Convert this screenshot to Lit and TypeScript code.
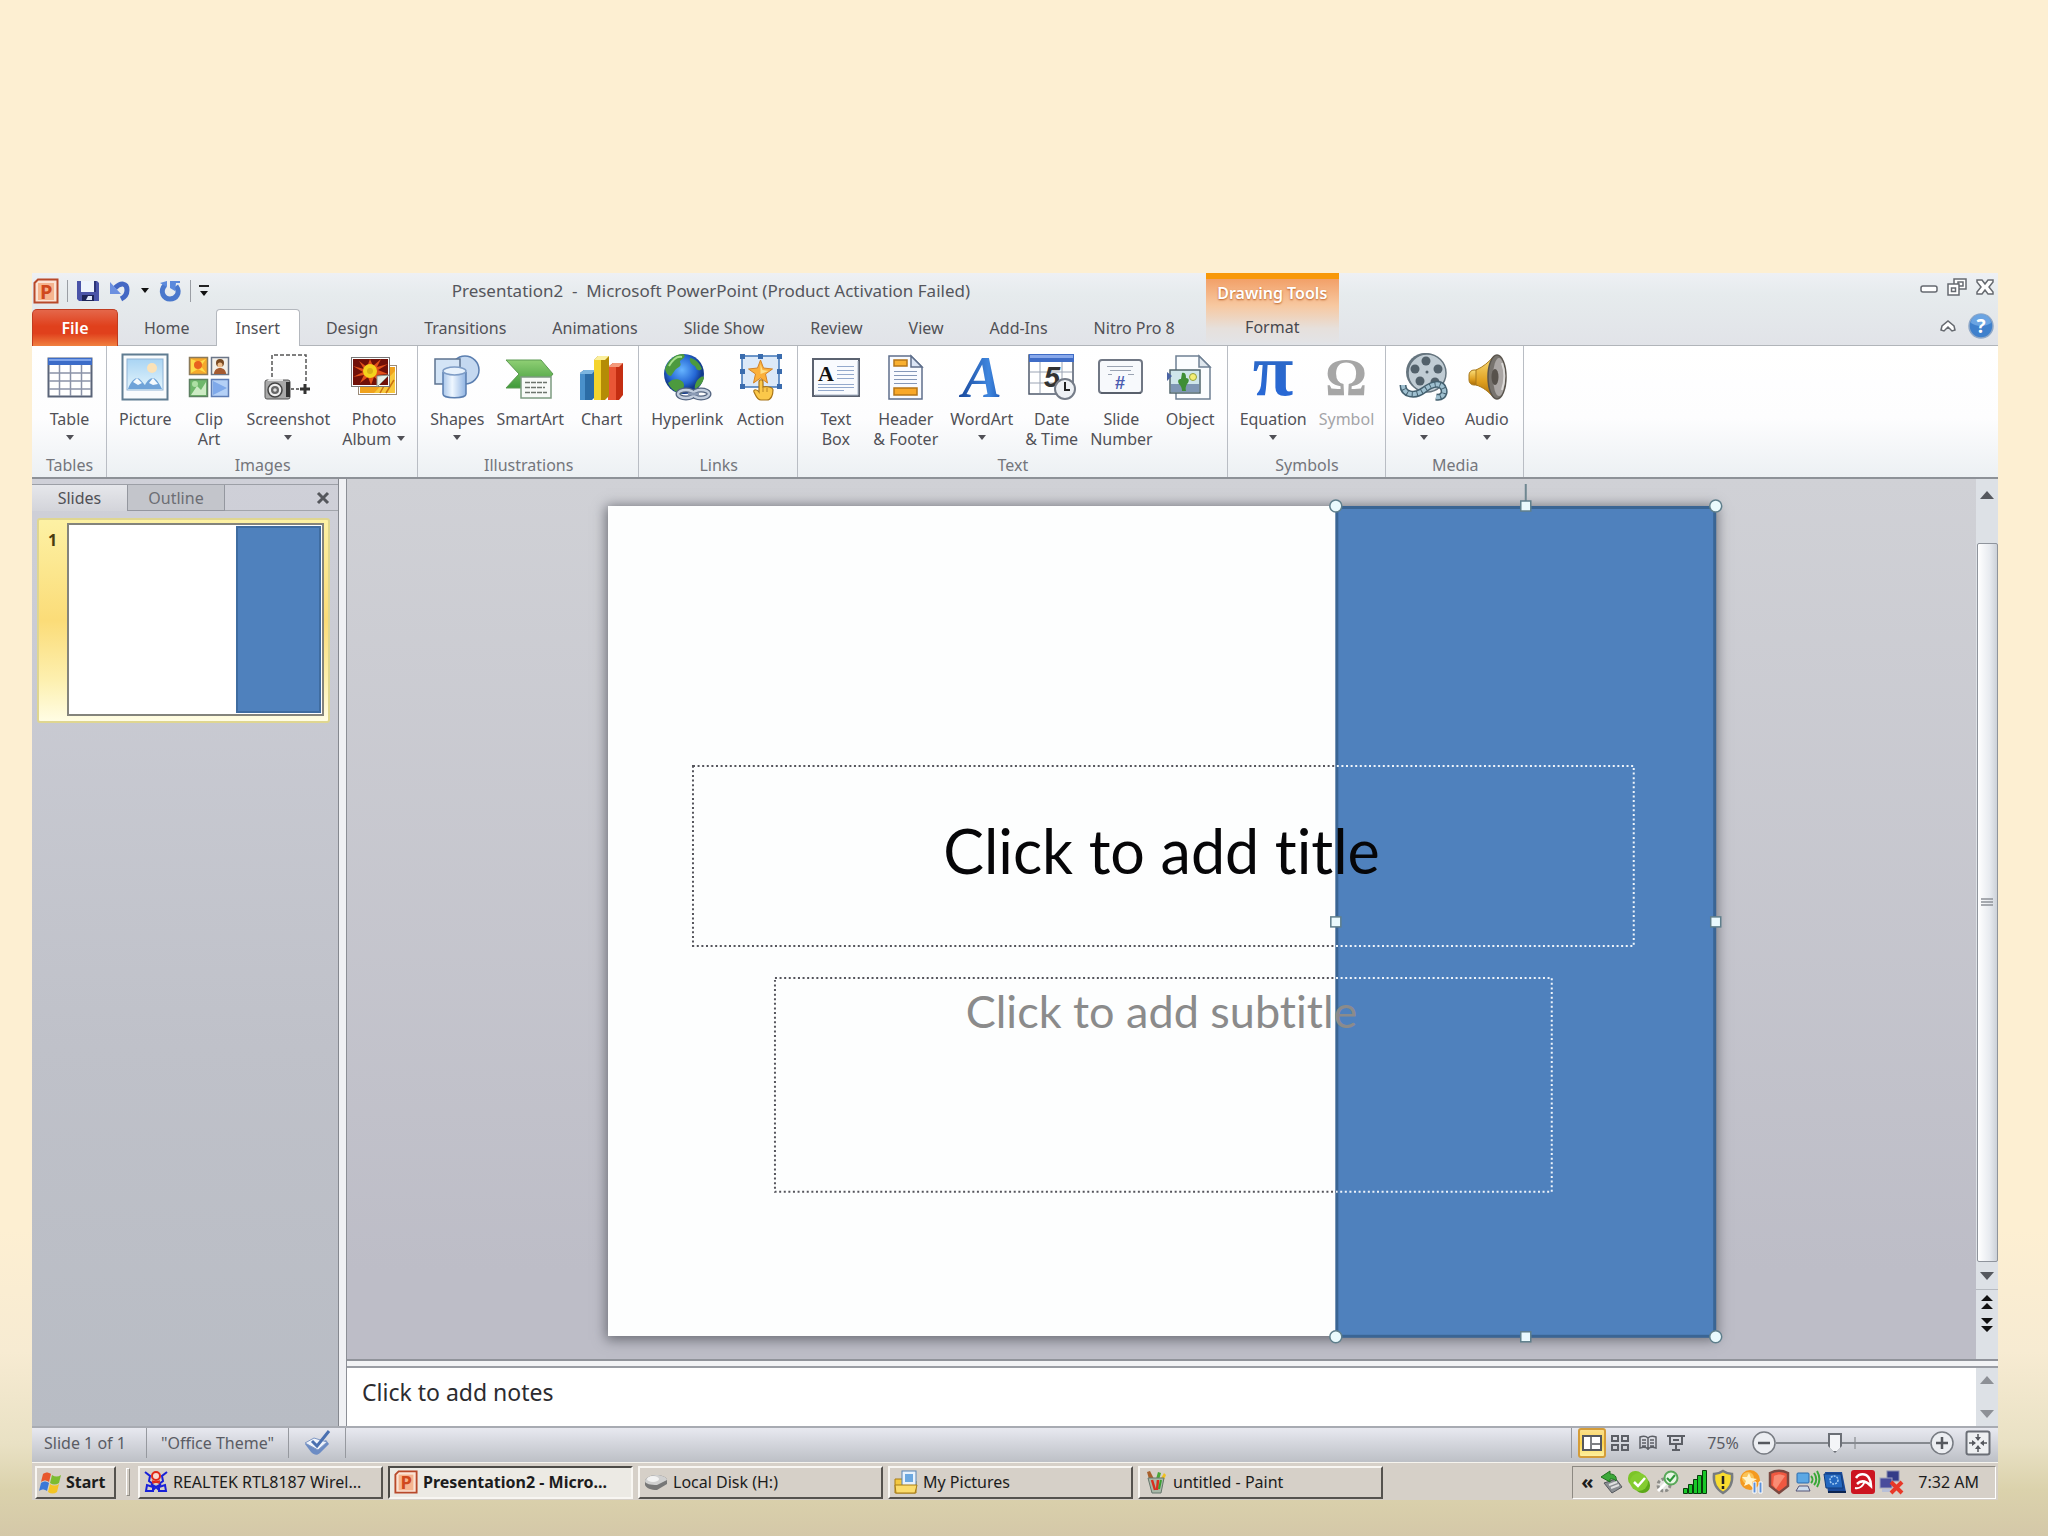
import { LitElement, html, svg, css, TemplateResult } from "lit";
import { customElement, state } from "lit/decorators.js";

type Icon = TemplateResult;

/* ---------- Ribbon icons, 48 x 48 ---------- */
const tableIcon: Icon = html`<svg viewBox="0 0 48 48" aria-hidden="true">
  <rect x="2.500" y="5.500" width="43" height="38" fill="#fff" stroke="#5a6478" stroke-width="2"/>
  <path d="M2 5h44v7H2z" fill="#3c6cc8"/><path d="M3 6h42v2H3z" fill="#7fa4ea"/>
  <path d="M13.500 12v31M24.500 12v31M35.500 12v31M3 20h42M3 28h42M3 36h42" stroke="#8b93a8" stroke-width="1.500"/>
</svg>`;
const pictureIcon: Icon = html`<svg viewBox="0 0 48 48" aria-hidden="true">
  <defs><linearGradient id="pic" x2="0" y2="1"><stop stop-color="#a9d4f3"/><stop offset="1" stop-color="#e4f5fc"/></linearGradient></defs>
  <rect x="1.500" y="1.500" width="45" height="45" fill="#f8fbfd" stroke="#5f7c92" stroke-width="2"/>
  <rect x="6" y="6" width="36" height="31" fill="url(#pic)" stroke="#8fb4d6"/>
  <circle cx="31" cy="15" r="5" fill="#fbe2b8"/>
  <path d="M7 36c2-6 6-11 9-11s6 5 8 7c2-4 5-7 8-7s6 5 9 11z" fill="#6fa3d8"/>
  <path d="M12 29l4-4 5 5-4 2zM28 30l4-5 5 6-5 1z" fill="#f4fafe"/>
</svg>`;
const clipIcon: Icon = html`<svg viewBox="0 0 48 48" aria-hidden="true">
  <rect x="4.500" y="4.500" width="18" height="17" fill="#f6a92b" stroke="#8b7a5a" stroke-width="1.500"/>
  <path d="M6 6l8 3 7-3-5 7 5 7-8-4-7 4z" fill="#fcdc4a"/><circle cx="13" cy="12" r="4" fill="#e8621e"/>
  <rect x="26.500" y="4.500" width="17" height="17" fill="#f3f0ea" stroke="#6b7688" stroke-width="1.500"/>
  <circle cx="35" cy="10" r="4" fill="#7a4a22"/><circle cx="35" cy="12" r="2.500" fill="#eebf8e"/><path d="M29 21c0-4 3-6 6-6s6 2 6 6z" fill="#a55b32"/>
  <rect x="4.500" y="26.500" width="18" height="17" fill="#6fb86b" stroke="#5d7f62" stroke-width="1.500"/>
  <path d="M6 42l6-9 4 4 5-8v13z" fill="#cdebc4"/><circle cx="10" cy="31" r="3" fill="#aee0a4"/>
  <rect x="26.500" y="26.500" width="17" height="17" fill="#b4d0f6" stroke="#5d7cb4" stroke-width="1.500"/>
  <path d="M28 28l14 7-14 7z" fill="#7fa9ea"/>
</svg>`;
const shotIcon: Icon = html`<svg viewBox="0 0 48 48" aria-hidden="true">
  <path d="M8 24V2h34v28" fill="none" stroke="#555" stroke-width="1.500" stroke-dasharray="4 2"/>
  <path d="M27 36h8" stroke="#444" stroke-width="1.500" stroke-dasharray="3 2"/><path d="M36 36h10M41 31v10" stroke="#333" stroke-width="3"/>
  <rect x="1" y="27" width="25" height="19" rx="2" fill="#a9a9a9" stroke="#555"/><path d="M3 28h16v-2H5z" fill="#e4e4e4"/>
  <rect x="22" y="29" width="4" height="15" fill="#333"/>
  <circle cx="11" cy="37" r="7" fill="#eee" stroke="#444" stroke-width="1.500"/><circle cx="11" cy="37" r="4" fill="#666"/><circle cx="11" cy="37" r="1.800" fill="#ddd"/>
</svg>`;
const albumIcon: Icon = html`<svg viewBox="0 0 48 48" aria-hidden="true">
  <rect x="8.500" y="12.500" width="38" height="29" fill="#fff" stroke="#9a8a78"/>
  <rect x="10" y="14" width="35" height="26" fill="#f0a21c"/><path d="M24 40l21-22v22z" fill="#f8c83c"/><path d="M30 40l9-16M36 40l8-13" stroke="#c97210" stroke-width="1.500"/>
  <rect x="1.500" y="4.500" width="38" height="29" fill="#fff" stroke="#777"/>
  <rect x="3" y="6" width="35" height="26" fill="#701008"/>
  <path d="M20 6l3 7 8-7-4 8 11-3-10 6 10 4-11 1 5 8-8-6-3 8-3-8-8 6 4-8-11 2 10-5-10-6 11 3-5-8 8 6z" fill="#e2501a"/>
  <circle cx="20" cy="18" r="7" fill="#f4d21c"/><circle cx="20" cy="18" r="3" fill="#d9b014"/>
  <path d="M27 34V23l12-1z" fill="#e6efe8" stroke="#8a948c"/>
</svg>`;
const shapesIcon: Icon = html`<svg viewBox="0 0 48 48" aria-hidden="true">
  <defs><linearGradient id="shp"><stop stop-color="#a9c6ea"/><stop offset=".4" stop-color="#eff7ff"/><stop offset="1" stop-color="#8fb3e2"/></linearGradient></defs>
  <circle cx="32" cy="17" r="14" fill="#c4d8f0" stroke="#5a7eb0" stroke-width="1.500"/>
  <rect x="2" y="6" width="25" height="25" fill="#d3e4f6" stroke="#5d7390" stroke-width="1.500"/>
  <path d="M10 19v22c0 5 23 5 23 0V19" fill="url(#shp)" stroke="#5a7eb0" stroke-width="1.500"/>
  <ellipse cx="21.500" cy="18" rx="11.500" ry="4" fill="#e8f2fc" stroke="#7d9cc6" stroke-width="1.500"/>
</svg>`;
const smartIcon: Icon = html`<svg viewBox="0 0 48 48" aria-hidden="true">
  <defs><linearGradient id="sma" x2="0" y2="1"><stop stop-color="#8fcf74"/><stop offset="1" stop-color="#3f9a3a"/></linearGradient></defs>
  <path d="M0 7h35l12 14-12 14H0l13-14z" fill="url(#sma)" stroke="#5c9a52"/>
  <rect x="15" y="24" width="30" height="21" fill="#f8faf8" stroke="#7c9a80" stroke-width="1.500"/>
  <path d="M19 29.500h22M19 34.500h20M19 39.500h22" stroke="#6d756d" stroke-width="1.500" stroke-dasharray="5 1"/>
</svg>`;
const chartIcon: Icon = html`<svg viewBox="0 0 48 48" aria-hidden="true">
  <path d="M2 20l4-3h11v27l-3 3H2z" fill="#2c6ca6"/><path d="M2 20l4-3h11l-3 4H2z" fill="#7db6e0"/><path d="M2 21h5v26H2z" fill="#4a90cb"/>
  <path d="M30 14l5-4h10v32l-4 5H30z" fill="#c42e12"/><path d="M30 14l5-4h10l-4 4z" fill="#f49a7c"/><path d="M30 14h8v33h-8z" fill="#ea5636"/>
  <path d="M16 7l4-4h11v40l-4 4H16z" fill="#b48c06"/><path d="M16 7l4-4h11l-4 4z" fill="#fbef9c"/><path d="M16 7h7v40h-7z" fill="#f4d32c"/>
</svg>`;
const linkIcon: Icon = html`<svg viewBox="0 0 48 48" aria-hidden="true">
  <defs><radialGradient id="glb" cx=".45" cy=".4"><stop stop-color="#66b4ff"/><stop offset=".7" stop-color="#2466d4"/><stop offset="1" stop-color="#123a8c"/></radialGradient></defs>
  <circle cx="21" cy="21" r="20" fill="url(#glb)"/>
  <path d="M2 16C5 7 12 1 20 1c3 1 2 4-2 6-3 2 2 4-2 7-5 3-5 5-8 9-3 0-5-3-6-7zM27 5c6 1 10 6 12 11-4 3-6 0-7-3-3-1-6-4-5-8zM9 27c6-2 12 1 12 5s-3 6-2 9c-6-1-12-6-14-11zM38 24c2-1 3 0 3 1-1 5-5 9-9 11-1-4 2-10 6-12z" fill="#4c9a3e"/>
  <path d="M6 13C10 6 15 3 19 4" stroke="#a5e08c" stroke-width="2" fill="none"/>
  <g fill="none" stroke="#536480" stroke-width="5"><ellipse cx="23" cy="41" rx="8" ry="4"/><ellipse cx="38" cy="41" rx="8" ry="4"/></g>
  <g fill="none" stroke="#c3cede" stroke-width="2.500"><ellipse cx="23" cy="41" rx="8" ry="4"/><ellipse cx="38" cy="41" rx="8" ry="4"/></g><path d="M25 41h11" stroke="#8b9ab4" stroke-width="3"/>
</svg>`;
const actionIcon: Icon = html`<svg viewBox="0 0 48 48" aria-hidden="true">
  <rect x="5" y="3" width="37" height="31" fill="#dce9f8" stroke="#3f75b8" stroke-width="1.500"/>
  <path d="M23.500 7l3 8 9 1-7 5 2 9-7-5-7 5 2-9-7-5 9-1z" fill="#fbb03a" stroke="#d2842a"/><path d="M23.500 11l2 6 6 1-8 3z" fill="#fde08a"/>
  <g fill="#3a6cae"><path d="M3 1h5v5H3zM21 1h5v5h-5zM40 1h5v5h-5zM3 16h5v5H3zM40 16h5v5h-5zM3 31h5v5H3zM40 31h5v5h-5z"/></g>
  <path d="M22 29c0-3 4-3 4 0v5c3-1 10 0 10 3 0 5-2 10-6 10h-6c-4 0-5-4-7-8-1-3 3-3 5 0z" fill="#fbc84a" stroke="#a87418" stroke-width="1.200"/><path d="M26 34v5M30 35v4" stroke="#b98526"/>
</svg>`;
const textBoxIcon: Icon = html`<svg viewBox="0 0 48 48" aria-hidden="true">
  <rect x="1" y="6" width="46" height="37" fill="#f9fbfe" stroke="#5b6270" stroke-width="2"/><path d="M3 42h43V8" stroke="#aab6c8" fill="none"/>
  <text x="6" y="28" font-family="Liberation Serif, serif" font-weight="700" font-size="22" fill="#111">A</text>
  <path d="M25 13.500h17M25 17.500h17M25 21.500h17M25 25.500h17M6 31.500h36M6 34.500h36M6 37.500h26" stroke="#93a9cc" stroke-width="1.200"/>
</svg>`;
const headerIcon: Icon = html`<svg viewBox="0 0 48 48" aria-hidden="true">
  <path d="M7 3h22l11 11v32H7z" fill="#f9fbff" stroke="#5f6f8c" stroke-width="1.500"/><path d="M29 3v11h11z" fill="#dce6f6" stroke="#5f6f8c" stroke-width="1.500"/>
  <rect x="12" y="7" width="13" height="6" fill="#f9b030" stroke="#b4761a" stroke-width="1.500"/>
  <path d="M12 18.500h23M12 22.500h23M12 26.500h23M12 30.500h23" stroke="#8497b8" stroke-width="1.200"/>
  <rect x="12" y="35" width="23" height="7" fill="#f9a828" stroke="#b4761a" stroke-width="1.500"/>
</svg>`;
const wordArtIcon: Icon = html`<svg viewBox="0 0 48 48" aria-hidden="true">
  <defs><linearGradient id="wa"><stop stop-color="#17469a"/><stop offset=".7" stop-color="#3f86de"/><stop offset="1" stop-color="#1f5ab8"/></linearGradient></defs>
  <text x="4" y="44" font-family="Liberation Serif, serif" font-style="italic" font-weight="700" font-size="60" fill="url(#wa)">A</text>
</svg>`;
const dateIcon: Icon = html`<svg viewBox="0 0 48 48" aria-hidden="true">
  <rect x="1" y="2" width="44" height="39" fill="#fff" stroke="#4f5a6c" stroke-width="1.500"/><path d="M1 1h45v8H1z" fill="#3f6cc6"/><path d="M2 2h43v3H2z" fill="#88a8ea"/>
  <path d="M12 9v31M34 9v31M2 19h42M2 30h42" stroke="#9ba4b4"/>
  <text x="16" y="34" font-family="Liberation Sans, sans-serif" font-weight="700" font-style="italic" font-size="29" fill="#333">5</text>
  <circle cx="37" cy="36" r="10" fill="#eef1f5" stroke="#757c88" stroke-width="2"/><path d="M37 29v8h5" stroke="#222" stroke-width="2" fill="none"/>
</svg>`;
const numberIcon: Icon = html`<svg viewBox="0 0 48 48" aria-hidden="true">
  <rect x="2" y="7" width="43" height="33" rx="3" fill="#f7f9fc" stroke="#707784" stroke-width="2"/><path d="M4 40h40" stroke="#525964" stroke-width="1.500"/>
  <path d="M10 13.500h26M13 17.500h21M11 21.500h4M31 21.500h6" stroke="#9aa3b2"/>
  <text x="18" y="36" font-family="Liberation Sans, sans-serif" font-size="18" font-weight="700" fill="#4a5cb0">#</text>
</svg>`;
const objectIcon: Icon = html`<svg viewBox="0 0 48 48" aria-hidden="true">
  <path d="M10 3h23l11 11v32H10z" fill="#fbfdff" stroke="#6f8094" stroke-width="1.500"/><path d="M33 3v11h11z" fill="#dfe7ee" stroke="#6f8094" stroke-width="1.500"/>
  <rect x="4" y="17" width="30" height="23" fill="#cfe6ea" stroke="#51656c" stroke-width="1.500"/><path d="M5 31h28v8H5z" fill="#7f97b4"/>
  <path d="M16 20c4-1 4 3 4 5 3 0 4 3 1 6-1 2-2 4-1 7h-4c0-3-1-5-3-7-2-4 0-5 2-5z" fill="#3f8e36"/>
  <circle cx="27" cy="24" r="3.500" fill="#f4ee74" stroke="#94a23c"/><path d="M1 19l5 4-5 5z" fill="#4a64a4"/>
</svg>`;
const piIcon: Icon = html`<svg viewBox="0 0 48 48" aria-hidden="true">
  <defs><linearGradient id="pig" x2="0" y2="1"><stop stop-color="#2f68bc"/><stop offset="1" stop-color="#2668dc"/></linearGradient></defs>
  <text x="24" y="42" text-anchor="middle" font-family="Liberation Serif, serif" font-weight="700" font-size="74" fill="url(#pig)">π</text>
</svg>`;
const omegaIcon: Icon = html`<svg viewBox="0 0 48 48" aria-hidden="true">
  <text x="24" y="42" text-anchor="middle" font-family="Liberation Serif, serif" font-weight="700" font-size="52" fill="#a6a6a6">Ω</text>
</svg>`;
const videoIcon: Icon = html`<svg viewBox="0 0 48 48" aria-hidden="true">
  <circle cx="25" cy="19" r="19" fill="#65747e"/><circle cx="27" cy="20" r="19" fill="#c0ccd4" stroke="#65747e" stroke-width="1.500"/>
  <g fill="#52616b"><circle cx="26" cy="8" r="4.500"/><circle cx="38" cy="16" r="4.500"/><circle cx="35" cy="29" r="4.500"/><circle cx="20" cy="28" r="4.500"/><circle cx="15" cy="16" r="4.500"/><circle cx="27" cy="19" r="1.500"/></g>
  <path d="M3 32c0 10 12 12 21 5s18-8 20 0c1 5-3 8-8 7" fill="none" stroke="#44606f" stroke-width="7"/><path d="M3 32c0 10 12 12 21 5s18-8 20 0c1 5-3 8-8 7" fill="none" stroke="#9fc0d0" stroke-width="4" stroke-dasharray="4 1"/>
</svg>`;
const audioIcon: Icon = html`<svg viewBox="0 0 48 48" aria-hidden="true">
  <defs><linearGradient id="aud" x2="0" y2="1"><stop stop-color="#fbe07c"/><stop offset=".6" stop-color="#e0a020"/><stop offset="1" stop-color="#a86c08"/></linearGradient></defs>
  <rect x="6" y="17" width="12" height="15" rx="5" fill="url(#aud)" stroke="#a8781c"/>
  <path d="M13 17C20 14 26 9 31 3v42c-5-6-11-11-18-13z" fill="url(#aud)" stroke="#a8781c"/>
  <ellipse cx="34" cy="24" rx="9" ry="22" fill="#77736e" stroke="#59544d" stroke-width="1.500"/><ellipse cx="36" cy="24" rx="6" ry="19" fill="#aaa6a4"/>
  <ellipse cx="32" cy="24" rx="3.500" ry="8" fill="#57524c"/><path d="M39 10c3 8 3 18 0 27" stroke="#dcdad8" stroke-width="2" fill="none"/>
</svg>`;

/* ---------- Small icons ---------- */
const appIcon: Icon = html`<svg viewBox="0 0 26 26" aria-hidden="true">
  <path d="M5 1.500h19.500v23H1.500V5z" fill="#fbe3d4" stroke="#b8492a" stroke-width="2"/><path d="M5 5h16v17H5z" fill="#f6b48e"/>
  <text x="7" y="21" font-family="Noto Sans, sans-serif" font-weight="700" font-size="20" fill="#d0481c">P</text>
</svg>`;
const saveIcon: Icon = html`<svg viewBox="0 0 24 24" aria-hidden="true">
  <path d="M1 2h20l2 2v18H3l-2-2z" fill="#4a54a8"/><path d="M5 2h14v11H5z" fill="#eef4fc"/><path d="M18 2h2v11h-2z" fill="#2c3478"/><path d="M6 16h12v6H6z" fill="#1c2458"/><path d="M12 17h4v4h-6z" fill="#dfe6f8"/>
</svg>`;
const undoIcon: Icon = html`<svg viewBox="0 0 24 24" aria-hidden="true">
  <path d="M7 9c6-6 12-5 12 2 0 4-2 7-6 9" fill="none" stroke="#4468c4" stroke-width="5"/><path d="M2 3v12h11z" fill="#6c90e0"/>
</svg>`;
const redoIcon: Icon = html`<svg viewBox="0 0 24 24" aria-hidden="true">
  <path d="M7 6c-6 7-1 14 5 14s11-6 6-13" fill="none" stroke="#4a78cc" stroke-width="5"/><path d="M12 2h10v2h-4l-1 8-5-3z" fill="#5c8adc"/><path d="M2 4l7-2v6z" fill="#5c8adc"/>
</svg>`;
const windowsFlag: Icon = html`<svg viewBox="0 0 24 24" aria-hidden="true">
  <path d="M4 4c3-2 5-2 8 0l-2 8c-3-2-5-2-8 0z" fill="#e8582c"/><path d="M13 5c3 2 6 2 9 0l-2 8c-3 2-6 2-9 0z" fill="#7cbc30"/>
  <path d="M2 13c3-2 5-2 8 0l-2 8c-3-2-5-2-8 0z" fill="#3c78d8"/><path d="M11 14c3 2 6 2 9 0l-2 8c-3 2-6 2-9 0z" fill="#f4c424"/>
</svg>`;
const realtekIcon: Icon = html`<svg viewBox="0 0 24 24" aria-hidden="true">
  <g fill="none" stroke="#1820d8" stroke-width="2"><path d="M1 2l5 4-1 5 4 3M23 2l-5 4 1 5-4 3M7 14l5 3 5-3M9 17l-6-2-1 6h7zM15 17l6-2 1 6h-7zM9 20l3-3 3 3"/></g>
  <circle cx="12" cy="6" r="4" fill="#f8d8d0" stroke="#e02818" stroke-width="2"/><path d="M8 11l8 2M16 11l-8 2" stroke="#e02818" stroke-width="1.500"/>
</svg>`;
const diskIcon: Icon = html`<svg viewBox="0 0 24 24" aria-hidden="true">
  <path d="M1 11c0-3 6-6 11-6s11 2 11 5v4l-10 6c-6 0-11-2-12-5z" fill="#777"/><path d="M1 11c0-3 6-6 11-6s11 2 11 5l-10 5c-6 0-12-1-12-4z" fill="#d0d0d0"/><ellipse cx="9" cy="9" rx="6" ry="3" fill="#f2f2f2"/>
</svg>`;
const picturesIcon: Icon = html`<svg viewBox="0 0 24 24" aria-hidden="true">
  <path d="M1 9h7l2 2h12v12H1z" fill="#f4c840" stroke="#a87c14"/><rect x="8" y="1" width="14" height="15" fill="#e8f2fc" stroke="#5884b4"/><rect x="11" y="4" width="8" height="8" fill="#6ca8e0"/><path d="M1 15h22l-2 8H2z" fill="#fbdc6c" stroke="#a87c14"/>
</svg>`;
const paintIcon: Icon = html`<svg viewBox="0 0 24 24" aria-hidden="true">
  <path d="M5 9l-2-7 3-1 4 8z" fill="#a8602c"/><path d="M12 9l2-7 3 1-2 7z" fill="#48a838"/><path d="M16 10l4-7 2 2-3 7z" fill="#f0c020"/>
  <path d="M4 8h16l-3 15H8z" fill="#a8b8a8" stroke="#66766c"/><path d="M8 10l3 10M14 10l-1 10" stroke="#d83020" stroke-width="2.500"/><path d="M17 10l-2 9" stroke="#38a030" stroke-width="2"/>
</svg>`;

const trayIcons: { name: string; art: Icon }[] = [
  { name: "Safely remove hardware", art: html`<svg viewBox="0 0 24 24"><path d="M5 13l12-4 6 8-10 6z" fill="#8a8e92" stroke="#55595e"/><path d="M12 18l8-3M10 15l8-3" stroke="#e0e0e0" stroke-width="2"/><path d="M2 7l9-6v3c5 0 7 3 6 7-2-2-3-2-6-2v3z" fill="#3ca838" stroke="#207020"/></svg>` },
  { name: "Messenger", art: html`<svg viewBox="0 0 24 24"><rect x="1" y="1" width="15" height="15" rx="7" fill="#7cc428"/><rect x="8" y="8" width="15" height="15" rx="7" fill="#5ca818"/><circle cx="12" cy="12" r="9" fill="#84cc30"/><path d="M7 12l4 4 7-8" fill="none" stroke="#fff" stroke-width="2.500"/></svg>` },
  { name: "Updates", art: html`<svg viewBox="0 0 24 24"><circle cx="9" cy="15" r="6" fill="#e4e4e0" stroke="#8c8c88" stroke-width="3" stroke-dasharray="3 2"/><path d="M3 21l8-8" stroke="#fff" stroke-width="3"/><circle cx="16" cy="8" r="6.500" fill="#e8f6e4" stroke="#58a858" stroke-width="2"/><path d="M12 8l3 3 5-6" fill="none" stroke="#2c9838" stroke-width="2"/></svg>` },
  { name: "Signal strength", art: html`<svg viewBox="0 0 24 24"><g fill="#18c828" stroke="#083c0c"><path d="M.500 18.500h4v5h-4zM5.500 14.500h4v9h-4zM10.500 9.500h4v14h-4zM14.500 5.500h4v18h-4zM19.500.500h4v23h-4z"/></g></svg>` },
  { name: "Security alert", art: html`<svg viewBox="0 0 24 24"><path d="M12 1c3 2 6 3 9 3 1 9-2 15-9 19C5 19 2 13 3 4c3 0 6-1 9-3z" fill="#f8dc30" stroke="#777c80" stroke-width="2.500"/><path d="M12 6v8M12 16v3" stroke="#222" stroke-width="2.500"/></svg>` },
  { name: "Power", art: html`<svg viewBox="0 0 24 24"><circle cx="11" cy="10" r="10" fill="#f49a20"/><circle cx="9" cy="8" r="6" fill="#fbc458"/><path d="M10 3l2 5 6 1-5 3 1 6-4-4-5 2 2-5-4-4h5z" fill="#fff4cc"/><path d="M14 12h3v11h-3zM20 12h3v11h-3z" fill="#5c90d8" stroke="#fff"/></svg>` },
  { name: "Antivirus shield", art: html`<svg viewBox="0 0 24 24"><path d="M3 3c6-3 12-3 18 0v13l-9 7-9-7z" fill="#f05840" stroke="#7c4840" stroke-width="2.500"/><path d="M7 6c4-2 7-2 11 0l-9 13-3-4z" fill="#f98c74"/></svg>` },
  { name: "Wireless network", art: html`<svg viewBox="0 0 24 24"><rect x="2" y="3" width="12" height="10" rx="1" fill="#5ca8e4" stroke="#2c6cac"/><path d="M4 16h9l2 5H1z" fill="#ccdcec" stroke="#557"/><path d="M16 6c2 2 2 5 0 7M19 3c3 4 3 9 0 12M22 1c3 5 3 11 0 16" fill="none" stroke="#38a838" stroke-width="2"/></svg>` },
  { name: "Wireless utility", art: html`<svg viewBox="0 0 24 24"><path d="M2 2h17l4 20H5z" fill="#1c4c9c"/><path d="M1 4h17l2 14H3z" fill="#2468c0" stroke="#123c7c"/><circle cx="11" cy="10" r="4" fill="none" stroke="#a4ccf4" stroke-width="1.500" stroke-dasharray="2 1"/><path d="M5 22h18" stroke="#0c2450" stroke-width="2"/></svg>` },
  { name: "Avira", art: html`<svg viewBox="0 0 24 24"><rect width="24" height="24" rx="3" fill="#cc1420"/><path d="M5 8c3-5 10-5 13 0 2 3 2 6 2 8-5-5-10-6-14-2" fill="none" stroke="#fff" stroke-width="2.500"/><path d="M14 11c-2 5-5 8-10 7" fill="none" stroke="#fff" stroke-width="2"/></svg>` },
  { name: "Network disconnected", art: html`<svg viewBox="0 0 24 24"><rect x="8" y="1" width="12" height="10" fill="#343c88" stroke="#888cac"/><rect x="1" y="8" width="12" height="10" fill="#484c9c" stroke="#a0a4c0"/><path d="M3 19h8v3H3z" fill="#b8c0d8"/><path d="M12 12l11 11M23 12L12 23" stroke="#e83828" stroke-width="4"/></svg>` },
];

interface Item { label: string[]; icon: Icon; arrow?: "below" | "inline"; off?: boolean }
interface Group { name: string; items: Item[] }

const groups: Group[] = [
  { name: "Tables", items: [{ label: ["Table"], icon: tableIcon, arrow: "below" }] },
  { name: "Images", items: [
    { label: ["Picture"], icon: pictureIcon },
    { label: ["Clip", "Art"], icon: clipIcon },
    { label: ["Screenshot"], icon: shotIcon, arrow: "below" },
    { label: ["Photo", "Album"], icon: albumIcon, arrow: "inline" } ] },
  { name: "Illustrations", items: [
    { label: ["Shapes"], icon: shapesIcon, arrow: "below" },
    { label: ["SmartArt"], icon: smartIcon },
    { label: ["Chart"], icon: chartIcon } ] },
  { name: "Links", items: [
    { label: ["Hyperlink"], icon: linkIcon },
    { label: ["Action"], icon: actionIcon } ] },
  { name: "Text", items: [
    { label: ["Text", "Box"], icon: textBoxIcon },
    { label: ["Header", "& Footer"], icon: headerIcon },
    { label: ["WordArt"], icon: wordArtIcon, arrow: "below" },
    { label: ["Date", "& Time"], icon: dateIcon },
    { label: ["Slide", "Number"], icon: numberIcon },
    { label: ["Object"], icon: objectIcon } ] },
  { name: "Symbols", items: [
    { label: ["Equation"], icon: piIcon, arrow: "below" },
    { label: ["Symbol"], icon: omegaIcon, off: true } ] },
  { name: "Media", items: [
    { label: ["Video"], icon: videoIcon, arrow: "below" },
    { label: ["Audio"], icon: audioIcon, arrow: "below" } ] },
];

const tabs = ["Home", "Insert", "Design", "Transitions", "Animations", "Slide Show", "Review", "View", "Add-Ins", "Nitro Pro 8"];

const tasks = [
  { text: "REALTEK RTL8187 Wirel...", icon: realtekIcon },
  { text: "Presentation2 - Micro...", icon: appIcon, active: true },
  { text: "Local Disk (H:)", icon: diskIcon },
  { text: "My Pictures", icon: picturesIcon },
  { text: "untitled - Paint", icon: paintIcon },
];

const corners = [[728, 0], [1108, 0], [728, 831], [1108, 831]];
const edges = [[918, 0], [918, 831], [728, 416], [1108, 416]];

const down = html`<svg class="tri" viewBox="0 0 10 6" aria-hidden="true"><path d="M1 0h8L5 5z" fill="currentColor"/></svg>`;

@customElement("app-root")
export class AppRoot extends LitElement {
  @state() private zoom = 75;

  static styles = css`
    * { box-sizing: border-box; }
    :host {
      display: flex; flex-direction: column; min-height: 100vh; box-sizing: border-box;
      padding: 273px 50px 36px 32px;
      background: linear-gradient(#fdefd2 0%, #fdefd2 80%, #f7ebd2 88%, #e9e1c4 94%, #dbd2ac 97%, #d4c8a8 100%);
      font: 16px/20px "Noto Sans", "Open Sans", sans-serif; color: #505056;
    }
    button { font: inherit; color: inherit; border: 0; background: none; padding: 0; margin: 0; }
    svg { display: block; flex: none; overflow: visible; }
    .window { flex: 1; display: flex; flex-direction: column; }

    .header { display: grid; grid-template-columns: auto 133px 1fr; background: linear-gradient(#eef0f4, #e6ebed 30%, #e1e3e8); }
    .titlebar { height: 36px; display: flex; align-items: center; }
    .quick { display: flex; align-items: center; gap: 8px; width: 192px; padding-left: 1px; }
    .quick svg { width: 24px; height: 24px; }
    .quick .app svg { width: 26px; height: 26px; }
    .quick .tri { width: 10px; height: 6px; color: #111; }
    .quick .bar { width: 1px; height: 22px; background: #9a9ea4; }
    .quick .more { display: grid; gap: 4px; }
    .quick .more::before { content: ""; height: 2px; background: #222; }
    .title { flex: 1; margin: 0; padding-right: 8px; font-size: 17px; line-height: 28px; font-weight: 400; text-align: center; white-space: nowrap; color: #55565c; }
    .tabs { display: flex; height: 37px; border-bottom: 1px solid #b1b5ba; gap: 6px; padding-right: 11px; }
    .tab { height: 37px; padding: 0 19px; border: 1px solid transparent; border-bottom: 0; border-radius: 4px 4px 0 0; white-space: nowrap; }
    .tab.active { background: #fff; border-color: #b4b8be; }
    .file { width: 86px; height: 37px; color: #fff; font-weight: 600; border-radius: 5px 5px 0 0; border: 1px solid #c03c20;
      border-bottom: 0; background: linear-gradient(#e4674a, #e0401c 45%, #e0401c 65%, #f08040); }
    .context { display: flex; flex-direction: column; border-top: 6px solid #f89808; border-bottom: 1px solid #b1b5ba;
      background: linear-gradient(#f2a068, #f7c8a0 40%, #e6e0dc 75%, #e2e4e8); align-items: stretch; }
    .context span { height: 30px; line-height: 29px; text-align: center; color: #fff; font-weight: 600; text-shadow: 0 1px 2px #b85c20; }
    .context button { height: 36px; color: #48484e; }
    .wincol { display: flex; flex-direction: column; align-items: flex-end; justify-content: space-between; border-bottom: 1px solid #b1b5ba; }
    .winrow { display: flex; align-items: center; gap: 9px; padding-right: 4px; height: 27px; }
    .winrow.low { height: 38px; gap: 12px; }

    .ribbon { display: flex; height: 133px; background: linear-gradient(#fff, #fdfdfe 55%, #ecf0f3); border-bottom: 2px solid #8d9197; }
    .group { display: flex; flex-direction: column; justify-content: space-between; padding: 7px 5px 2px 6px; border-right: 1px solid #b9bdc4; }
    .items { display: flex; }
    .item { display: flex; flex-direction: column; align-items: center; min-width: 63px; padding: 0 6px; white-space: nowrap; }
    .item svg { width: 48px; height: 48px; margin-bottom: 8px; }
    .item .tri { width: 10px; height: 6px; margin: 6px 0 0; }
    .line { display: flex; align-items: center; gap: 5px; }
    .item .line .tri { margin: 0; }
    .item.off { color: #a4a4a8; }
    .gname { text-align: center; color: #74767c; }

    .body { flex: 1; display: flex; background: linear-gradient(#d0d1d6, #bcbdc6); }
    .side { width: 307px; display: flex; flex-direction: column; border-right: 1px solid #85888f; padding-top: 5px; background: linear-gradient(#cfd0d8, #bfc1c9 60%, #b8bcc4); }
    .sidetabs { display: flex; height: 27px; border-top: 1px solid #9c9fa6; }
    .sidetabs button { height: 26px; }
    .sidetabs .on { width: 95px; background: linear-gradient(#e6e7eb, #d3d4da); }
    .sidetabs .other { width: 98px; border: 1px solid #94979f; border-top: 0; color: #6c6e74; background: #c3c5cb; }
    .sidetabs .fill { flex: 1; display: flex; justify-content: flex-end; align-items: center; padding-right: 8px; border-bottom: 1px solid #a2a5ab; }
    .thumb { margin: 7px 8px 0 5px; display: flex; gap: 11px; padding: 3px 4px 5px 9px; border: 2px solid #dfd690; border-radius: 3px;
      background: linear-gradient(#fdf1a4, #fbdc78 50%, #fdf0b0 80%, #fffde4); text-align: left; }
    .thumb .no { width: 8px; font: 700 16px/34px "Noto Sans", sans-serif; color: #4a3c10; }
    .mini { flex: 1; aspect-ratio: 4 / 3; background: #fff; border: 2px solid #84847c; padding: 1px; display: flex; justify-content: flex-end; }
    .mini i { width: 34%; background: #4f81bd; border: 2px solid #3f6ca0; }
    .split { width: 8px; background: #f0f1f4; border-right: 1px solid #8c8f96; }

    .main { flex: 1; display: flex; flex-direction: column; min-width: 0; }
    .stage { flex: 1; display: flex; }
    .canvas { flex: 1; display: flex; justify-content: center; align-items: center; padding-top: 4px; background: linear-gradient(#d0d1d6, #bdbdc7 90%); }
    .slide { position: relative; width: 68%; aspect-ratio: 4 / 3; background: #fdfefe; box-shadow: 0 2px 12px 2px #6c6e76; }
    .art { position: absolute; inset: 0; width: 100%; height: 100%; }
    .art.top { pointer-events: none; }
    .ph { position: absolute; border: 0; background: none; outline: 0; resize: none; text-align: center; font-family: Lato, sans-serif; font-variant-ligatures: none; padding: 0; color: #000; overflow: hidden; }
    .ph.t { left: 8%; width: 84%; top: 31%; height: 21%; font-size: 61px; }
    .ph.s { left: 15%; width: 70%; top: 57%; height: 26%; font-size: 45px; line-height: 52px; padding-top: 6px; }
    .ph.t::placeholder { color: #060608; opacity: 1; }
    .ph.s::placeholder { color: #8b8b8b; opacity: 1; }

    .vbar { width: 22px; display: flex; flex-direction: column; align-items: center; background: #dde1e6; color: #55585e; }
    .vbar button { width: 22px; display: grid; place-items: center; }
    .vbar .up { height: 64px; padding-top: 12px; align-content: start; }
    .vbar .grab { flex: 1; width: 21px; border: 1px solid #8f949c; border-radius: 2px; background: linear-gradient(90deg, #fff, #e8ebf0 60%, #ccd1d8); }
    .vbar .dn { height: 28px; border-bottom: 1px solid #b6bac0; }
    .vbar .pg { height: 23px; color: #111; }
    .vbar .rest { height: 23px; }
    .hsplit { height: 9px; background: #f2f3f5; border-top: 2px solid #90939a; border-bottom: 2px solid #9a9da4; }
    .notes { display: flex; height: 58px; background: #fff; }
    .notes textarea { flex: 1; border: 0; outline: 0; resize: none; font: 23px/32px "Noto Sans", sans-serif; padding: 8px 15px; background: none; }
    .notes textarea::placeholder { color: #2c2c30; opacity: 1; }
    .notes .vbar { justify-content: space-between; color: #8d9096; padding: 8px 0; }

    .status { display: flex; height: 36px; align-items: center; border-top: 2px solid #a8abb2; padding-bottom: 4px; background: linear-gradient(#e8e9f0, #d6d8df 40%, #bdc0c6); color: #5a5c64; }
    .cell { height: 30px; display: flex; align-items: center; border-right: 1px solid #96999f; padding: 0 14px; }
    .cell.first { padding: 0 20px 0 12px; }
    .grow { flex: 1; height: 30px; border-right: 1px solid #96999f; }
    .views { display: flex; padding-left: 6px; align-items: center; }
    .views button { width: 28px; height: 30px; display: grid; place-items: center; }
    .views .on { border: 2px solid #d49c38; border-radius: 3px; background: linear-gradient(#fbe08c, #fdd44c, #fdf0a0); }
    .pct { width: 62px; text-align: center; padding: 0 5px 0 9px; }
    .zoom { display: flex; align-items: center; }
    .zoom input { appearance: none; width: 154px; height: 24px; margin: 0; background: linear-gradient(#85898f, #85898f) center / 100% 2px no-repeat, linear-gradient(#a8abb0, #a8abb0) 51% center / 2px 12px no-repeat; }
    .zoom input::-webkit-slider-thumb { appearance: none; width: 14px; height: 20px; background: #6b6f76; clip-path: polygon(0 0, 100% 0, 100% 65%, 50% 100%, 0 65%); box-shadow: inset 0 0 0 2px #6b6f76, inset 0 0 0 10px #f4f5f8; }
    .fit { margin: 0 7px 0 11px; }

    .taskbar { display: flex; height: 38px; align-items: center; gap: 5px; background: #d6d0c8; border-top: 1px solid #f6f4ee; padding: 2px 2px 1px 3px; color: #1c1c1c; }
    .task { height: 33px; width: 245px; display: flex; align-items: center; gap: 5px; padding: 0 4px; border: 2px solid; border-color: #f8f6f2 #55524e #55524e #f8f6f2; white-space: nowrap; background: #d6d0c8; }
    .task svg { width: 24px; height: 24px; }
    .task.active { font-weight: 700; border-color: #4c4a46 #f8f6f2 #f8f6f2 #4c4a46; background: #eceae4; }
    .start { width: 81px; font-weight: 700; gap: 3px; padding: 0 2px; }
    .grip { width: 4px; height: 28px; margin: 0 3px 0 5px; border: 1px solid; border-color: #fff #918d86 #918d86 #fff; }
    .tray { margin-left: auto; height: 33px; display: flex; align-items: center; gap: 4px; padding: 0 16px 0 6px; border: 1px solid; border-color: #8d8982 #fff #fff #8d8982; }
    .tray svg { width: 24px; height: 24px; }
    .tray .more { width: 16px; font-weight: 700; font-size: 20px; }
    .tray time { margin-left: 11px; white-space: nowrap; }
  `;

  private item(it: Item) {
    return html`<button class="item ${it.off ? "off" : ""}" ?disabled=${it.off}>
      ${it.icon}
      ${it.label.map((l, i) => html`<span class="line">${l}${it.arrow === "inline" && i === it.label.length - 1 ? down : ""}</span>`)}
      ${it.arrow === "below" ? down : ""}
    </button>`;
  }

  private onZoom(e: Event) {
    this.zoom = Number((e.target as HTMLInputElement).value);
  }

  private tri(dir: "up" | "down") {
    return dir === "up"
      ? html`<svg width="14" height="8" viewBox="0 0 14 8" aria-hidden="true"><path d="M0 8h14L7 0z" fill="currentColor"/></svg>`
      : html`<svg width="14" height="8" viewBox="0 0 14 8" aria-hidden="true"><path d="M0 0h14L7 8z" fill="currentColor"/></svg>`;
  }

  private header() {
    return html`<header class="header">
      <div>
        <div class="titlebar">
          <div class="quick">
            <span class="app">${appIcon}</span><span class="bar"></span>
            <button aria-label="Save">${saveIcon}</button>
            <button aria-label="Undo">${undoIcon}</button>
            <button aria-label="Undo list">${down}</button>
            <button aria-label="Repeat">${redoIcon}</button>
            <span class="bar"></span>
            <button class="more" aria-label="Customize toolbar">${down}</button>
          </div>
          <h1 class="title">Presentation2 &nbsp;-&nbsp; Microsoft PowerPoint (Product Activation Failed)</h1>
        </div>
        <nav class="tabs">
          <button class="file">File</button>
          ${tabs.map((t) => html`<button class="tab ${t === "Insert" ? "active" : ""}">${t}</button>`)}
        </nav>
      </div>
      <div class="context"><span>Drawing Tools</span><button>Format</button></div>
      <div class="wincol">
        <div class="winrow">
          <button aria-label="Minimize"><svg width="18" height="18" viewBox="0 0 18 18"><rect x="1" y="8" width="16" height="6" rx="2" fill="#fff" stroke="#666a70" stroke-width="1.500"/></svg></button>
          <button aria-label="Restore"><svg width="20" height="18" viewBox="0 0 20 18"><g fill="#fff" stroke="#666a70" stroke-width="1.500"><path d="M7 1h12v10H7z"/><path d="M11 4h5v4h-5z"/><path d="M1 6h11v11H1z"/><path d="M4.500 10h4v3.500h-4z"/></g></svg></button>
          <button aria-label="Close"><svg width="18" height="18" viewBox="0 0 18 18"><path d="M1 2h5l3 4 3-4h5v2l-4 5 4 5v2h-5l-3-4-3 4H1v-2l4-5-4-5z" fill="#fff" stroke="#666a70" stroke-width="1.500"/></svg></button>
        </div>
        <div class="winrow low">
          <button aria-label="Minimize ribbon"><svg width="16" height="14" viewBox="0 0 16 14"><path d="M1 11l1-4 6-5 6 5 1 4-3 1-4-4-4 4z" fill="#fff" stroke="#666a70" stroke-width="1.500"/></svg></button>
          <button aria-label="Help"><svg width="26" height="26" viewBox="0 0 26 26"><circle cx="13" cy="13" r="12" fill="#3f80cc" stroke="#8fa8c8" stroke-width="1.500"/><path d="M3 10a10 9 0 0 1 20 0c-6 4-14 4-20 0z" fill="#6ba4e2"/><text x="13" y="20" text-anchor="middle" font-size="19" font-weight="700" fill="#fff">?</text></svg></button>
        </div>
      </div>
    </header>`;
  }

  private slide() {
    return html`<div class="slide">
      <svg class="art" viewBox="0 0 1108 831" aria-hidden="true">
        <defs><linearGradient id="dot" gradientUnits="userSpaceOnUse" x1="0" x2="1108" y1="0" y2="0">
          <stop offset=".657" stop-color="#55555c"/><stop offset=".657" stop-color="#eef4fb"/></linearGradient></defs>
        <rect x="729" y="1.500" width="378" height="829" fill="#4f81bd" stroke="#3a6594" stroke-width="3"/>
        <g fill="none" stroke="url(#dot)" stroke-width="2" stroke-dasharray="2 2.600">
          <rect x="85" y="260" width="941" height="180"/><rect x="167" y="472" width="777" height="214"/>
        </g>
      </svg>
      <input class="ph t" aria-label="Title" placeholder="Click to add title">
      <textarea class="ph s" aria-label="Subtitle" placeholder="Click to add subtitle"></textarea>
      <svg class="art top" viewBox="0 0 1108 831" aria-hidden="true">
        <path d="M918-22V0" stroke="#6f8791" stroke-width="2"/>
        <g fill="#eafafd" stroke="#5f7f8c" stroke-width="1.500">
          ${corners.map(([x, y]) => svg`<circle cx=${x} cy=${y} r="6"/>`)}
          ${edges.map(([x, y]) => svg`<rect x=${x - 5} y=${y - 5} width="10" height="10"/>`)}
        </g>
      </svg>
    </div>`;
  }

  render() {
    return html`<main class="window">
      ${this.header()}
      <section class="ribbon" aria-label="Insert">
        ${groups.map((g) => html`<div class="group"><div class="items">${g.items.map((i) => this.item(i))}</div><div class="gname">${g.name}</div></div>`)}
      </section>
      <div class="body">
        <aside class="side">
          <div class="sidetabs">
            <button class="on">Slides</button><button class="other">Outline</button>
            <div class="fill"><button aria-label="Close pane"><svg width="14" height="14" viewBox="0 0 14 14"><path d="M2 2l10 10M12 2L2 12" stroke="#55575c" stroke-width="3"/></svg></button></div>
          </div>
          <button class="thumb" aria-label="Slide 1"><span class="no">1</span><span class="mini"><i></i></span></button>
        </aside>
        <div class="split"></div>
        <div class="main">
          <div class="stage">
            <div class="canvas">${this.slide()}</div>
            <div class="vbar">
              <button class="up" aria-label="Scroll up">${this.tri("up")}</button>
              <button class="grab" aria-label="Scroll position"><svg width="12" height="10" viewBox="0 0 12 10"><path d="M0 1h12M0 4h12M0 7h12" stroke="#8d9198" stroke-width="1.500"/></svg></button>
              <button class="dn" aria-label="Scroll down">${this.tri("down")}</button>
              <button class="pg" aria-label="Previous slide"><svg width="12" height="14" viewBox="0 0 12 14"><path d="M0 6h12L6 0zM0 14h12L6 8z" fill="currentColor"/></svg></button>
              <button class="pg" aria-label="Next slide"><svg width="12" height="14" viewBox="0 0 12 14"><path d="M0 0h12L6 6zM0 8h12l-6 6z" fill="currentColor"/></svg></button>
              <span class="rest"></span>
            </div>
          </div>
          <div class="hsplit"></div>
          <div class="notes">
            <textarea aria-label="Notes" placeholder="Click to add notes"></textarea>
            <div class="vbar"><button aria-label="Notes up">${this.tri("up")}</button><button aria-label="Notes down">${this.tri("down")}</button></div>
          </div>
        </div>
      </div>
      <footer class="status">
        <span class="cell first">Slide 1 of 1</span>
        <span class="cell">"Office Theme"</span>
        <span class="cell"><svg width="28" height="28" viewBox="0 0 28 28"><path d="M2 15l9-5 4 6 8-5 3 4-9 9c-3 3-6 2-9-1z" fill="#6c8cc4"/><path d="M2 14l9-5 13 4-9 8z" fill="#eef3fb" stroke="#8098c4"/><path d="M9 12l5 5L26 2" fill="none" stroke="#4a70b0" stroke-width="3"/></svg></span>
        <span class="grow"></span>
        <div class="views">
          <button class="on" aria-label="Normal view"><svg width="20" height="16" viewBox="0 0 20 16"><rect x="1" y="1" width="18" height="14" fill="#fff" stroke="#55585e" stroke-width="2"/><path d="M9 1v14M10 9h9" stroke="#55585e" stroke-width="1.500"/></svg></button>
          <button aria-label="Slide sorter"><svg width="18" height="16" viewBox="0 0 18 16"><g fill="none" stroke="#5c5f66" stroke-width="2"><path d="M1 1h6v5H1zM11 1h6v5h-6zM1 10h6v5H1zM11 10h6v5h-6z"/></g></svg></button>
          <button aria-label="Reading view"><svg width="18" height="16" viewBox="0 0 18 16"><path d="M1 2c3-1 6-1 8 1 2-2 5-2 8-1v11c-3-1-6-1-8 1-2-2-5-2-8-1zM9 3v12M3 5h4M3 8h4M11 5h4M11 8h4M3 11h4M11 11h4" fill="none" stroke="#5c5f66" stroke-width="1.500"/></svg></button>
          <button aria-label="Slide show"><svg width="18" height="16" viewBox="0 0 18 16"><path d="M0 1h18M3 2v7h12V2M9 9v5M5 15h8M6 5h6" fill="none" stroke="#5c5f66" stroke-width="2"/></svg></button>
        </div>
        <span class="pct">${this.zoom}%</span>
        <div class="zoom">
          <button aria-label="Zoom out"><svg width="24" height="24" viewBox="0 0 24 24"><circle cx="12" cy="12" r="11" fill="#eceef2" stroke="#777b82" stroke-width="1.500"/><path d="M6 12h12" stroke="#55585e" stroke-width="2.500"/></svg></button>
          <input type="range" aria-label="Zoom" min="10" max="185" .value=${String(this.zoom)} @input=${this.onZoom}>
          <button aria-label="Zoom in"><svg width="24" height="24" viewBox="0 0 24 24"><circle cx="12" cy="12" r="11" fill="#eceef2" stroke="#777b82" stroke-width="1.500"/><path d="M6 12h12M12 6v12" stroke="#55585e" stroke-width="2.500"/></svg></button>
        </div>
        <button class="fit" aria-label="Fit slide to window"><svg width="26" height="26" viewBox="0 0 26 26"><rect x="1.500" y="1.500" width="23" height="23" rx="2" fill="#eef0f2" stroke="#6b6f76" stroke-width="2"/><path d="M13 4v6M13 16v6M4 13h6M16 13h6" stroke="#55585e" stroke-width="1.500"/><path d="M10 7h6l-3 4zM10 19h6l-3-4zM7 10v6l4-3zM19 10v6l-4-3z" fill="#55585e"/></svg></button>
      </footer>
      <div class="taskbar">
        <button class="task start">${windowsFlag}Start</button>
        <span class="grip"></span>
        ${tasks.map((t) => html`<button class="task ${t.active ? "active" : ""}">${t.icon}${t.text}</button>`)}
        <div class="tray"><button class="more" aria-label="Show hidden icons">«</button>${trayIcons.map((t) => html`<span role="img" aria-label=${t.name}>${t.art}</span>`)}<time>7:32 AM</time></div>
      </div>
    </main>`;
  }
}
